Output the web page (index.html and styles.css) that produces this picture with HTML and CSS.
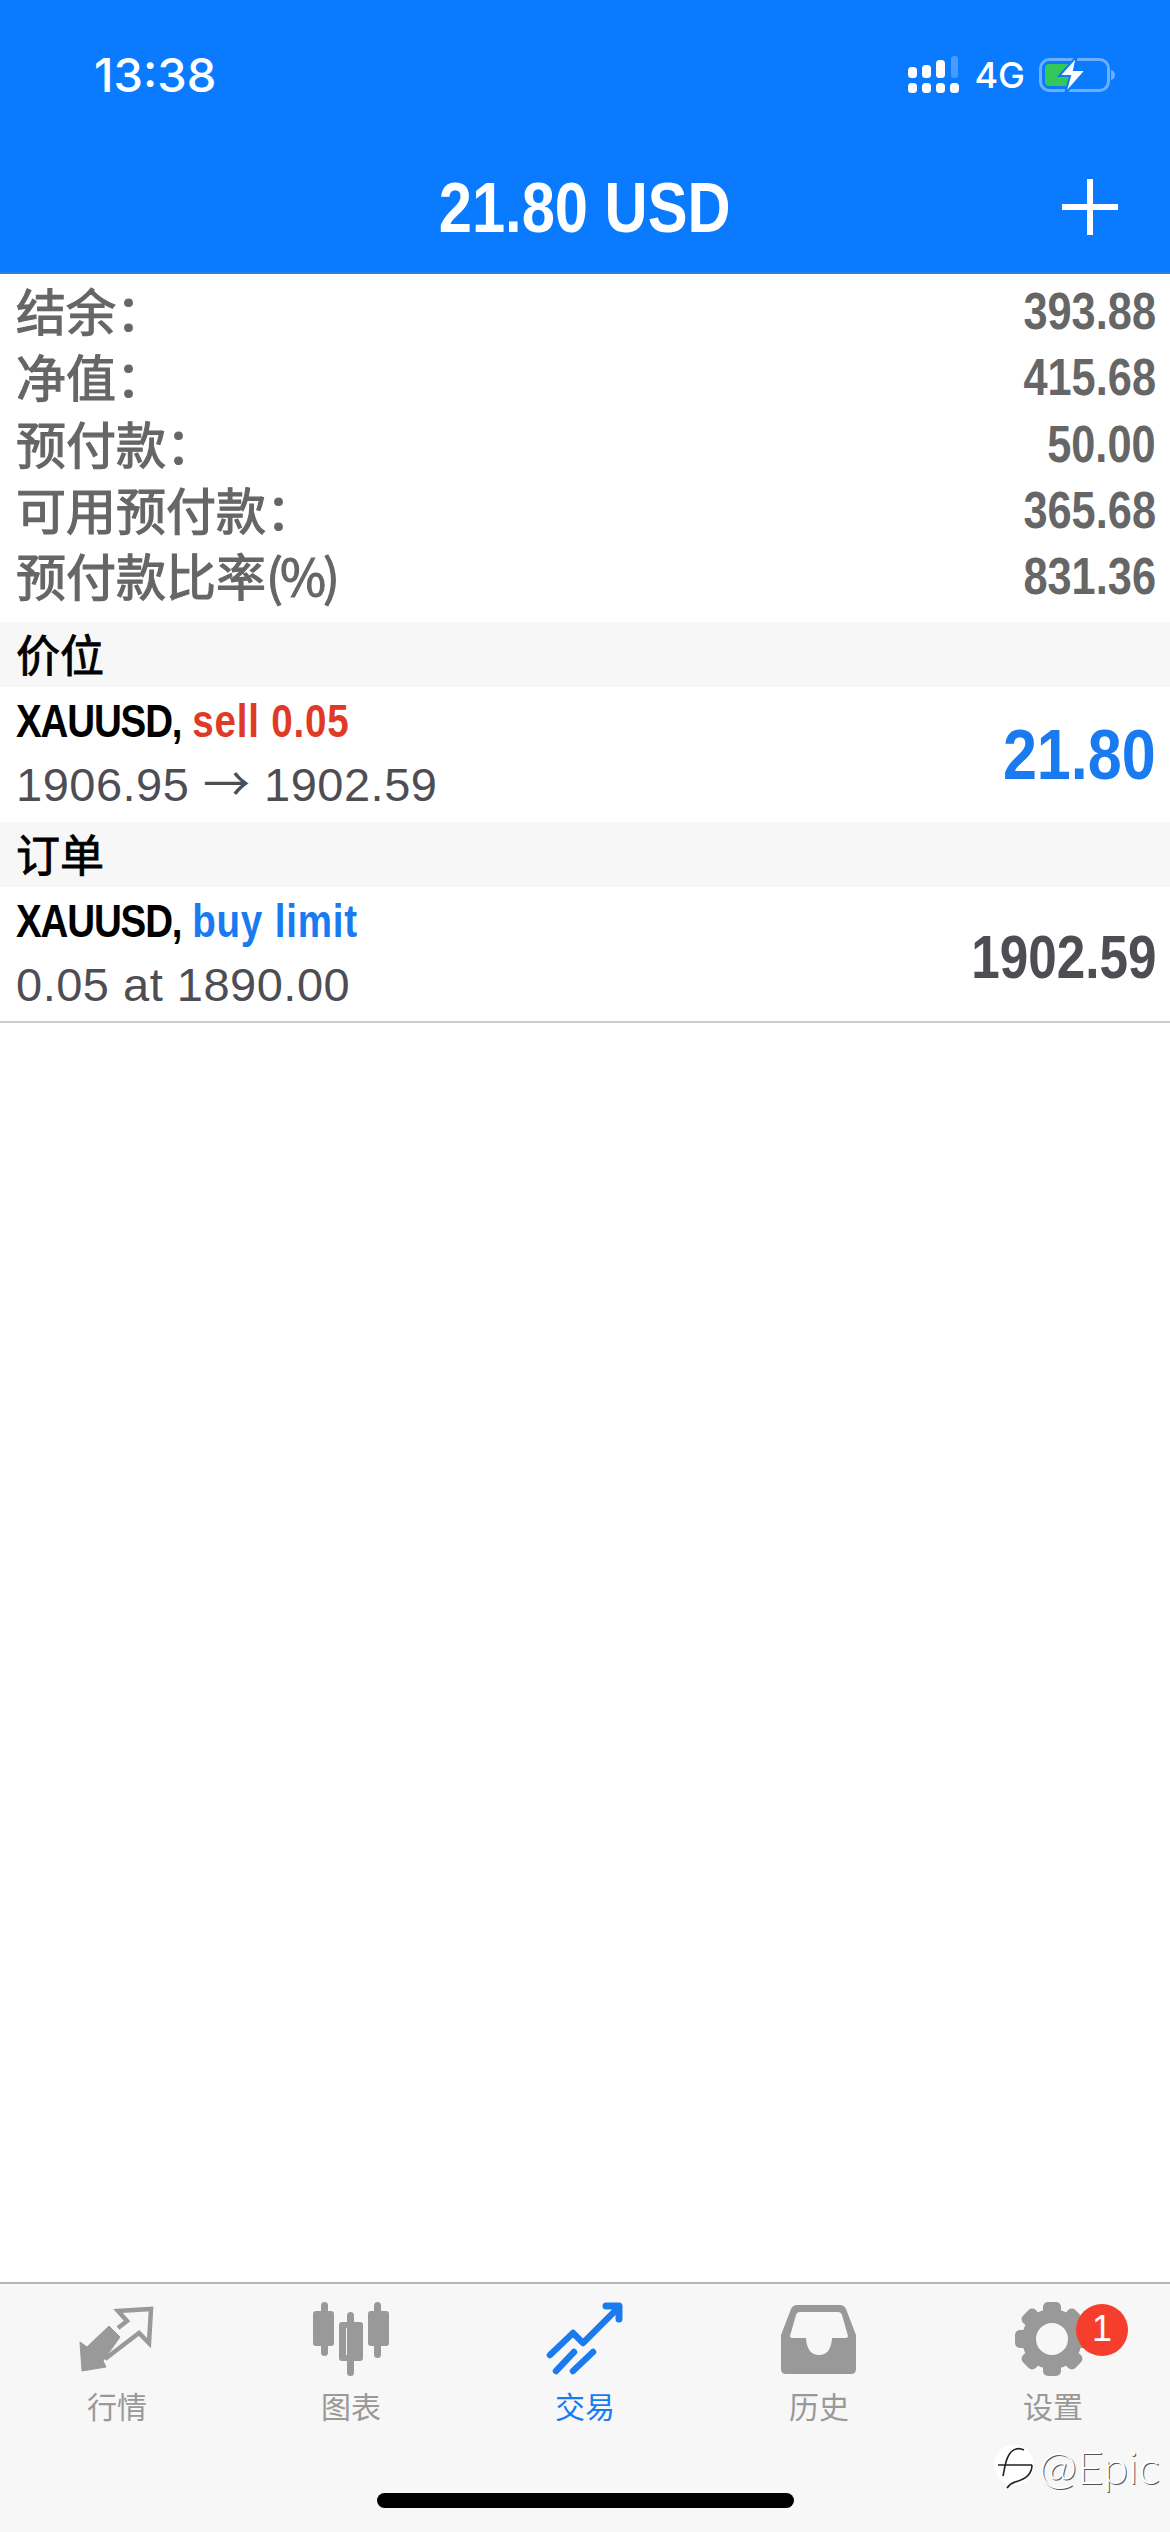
FILE: index.html
```html
<!DOCTYPE html>
<html lang="zh">
<head>
  <meta charset="UTF-8">
  <title>交易</title>
  <meta name="viewport" content="width=device-width, initial-scale=1.0">
  <link rel="stylesheet" href="styles.css">
</head>
<body>
  <div class="page">
    <header class="header">
      <div class="status-bar">
        <span class="time">13:38</span>
        <div class="status-icons">
          <svg class="signal" width="52" height="37" viewBox="0 0 52 37">
            <g fill="#fff">
              <rect x="1" y="27" width="9" height="10" rx="3.5"/>
              <rect x="15" y="27" width="9" height="10" rx="3.5"/>
              <rect x="29" y="27" width="9" height="10" rx="3.5"/>
              <rect x="43" y="27" width="9" height="10" rx="3.5"/>
              <rect x="1" y="11" width="9" height="11" rx="3.5"/>
              <rect x="15" y="9" width="9" height="13" rx="3.5"/>
              <rect x="29" y="4" width="9" height="18" rx="3.5"/>
            </g>
            <rect x="44" y="0" width="7" height="22" rx="3" fill="#fff" opacity="0.25"/>
          </svg>
          <span class="network">4G</span>
          <svg class="battery" width="78" height="38" viewBox="0 0 78 38">
            <rect x="1.5" y="3.5" width="68" height="31" rx="9" fill="none" stroke="#fff" stroke-opacity="0.4" stroke-width="3"/>
            <path d="M72 14q4 1 4 5t-4 5z" fill="#fff" fill-opacity="0.4"/>
            <rect x="6" y="8" width="30" height="22" rx="4" fill="#34c759"/>
            <path d="M38 0L20 20h11l-5 18 21-24H35z" fill="#fff" stroke="#0a7aff" stroke-width="2"/>
          </svg>
        </div>
      </div>
      <div class="title-bar">
        <span></span>
        <h1 class="title">21.80 USD</h1>
        <button class="add-btn" aria-label="add">
          <svg width="58" height="56" viewBox="0 0 58 56">
            <path d="M29 0v56M1 28h56" stroke="#fff" stroke-width="6" fill="none"/>
          </svg>
        </button>
      </div>
    </header>

    <main class="content">
      <section class="summary">
        <div class="summary-row"><span class="label">结余<span class="colon">：</span></span><b class="num">393.88</b></div>
        <div class="summary-row"><span class="label">净值<span class="colon">：</span></span><b class="num">415.68</b></div>
        <div class="summary-row"><span class="label">预付款<span class="colon">：</span></span><b class="num">50.00</b></div>
        <div class="summary-row"><span class="label">可用预付款<span class="colon">：</span></span><b class="num">365.68</b></div>
        <div class="summary-row"><span class="label">预付款比率<span class="percent">(%)</span></span><b class="num">831.36</b></div>
      </section>

      <div class="section-head">价位</div>
      <div class="trade-row">
        <div class="trade-info">
          <div class="trade-title"><span class="symbol">XAUUSD,</span> <span class="sell">sell 0.05</span></div>
          <div class="trade-sub">1906.95 <span class="arrow">→</span> 1902.59</div>
        </div>
        <b class="profit">21.80</b>
      </div>

      <div class="section-head">订单</div>
      <div class="trade-row last">
        <div class="trade-info">
          <div class="trade-title"><span class="symbol">XAUUSD,</span> <span class="buy">buy limit</span></div>
          <div class="trade-sub">0.05 at 1890.00</div>
        </div>
        <b class="price">1902.59</b>
      </div>
    </main>

    <nav class="tab-bar">
      <div class="tabs">
        <div class="tab">
          <svg width="110" height="90" viewBox="0 0 110 90">
            <path d="M56 33l9-7-9-10 33-2-2 34-10-10-34 26" fill="none" stroke="#999" stroke-width="4.5"/>
            <path d="M47 31l11 11-17 24 3 6-24 4-2-29 7 5z" fill="#999" stroke="#999" stroke-width="1" stroke-linejoin="round"/>
          </svg>
          <span>行情</span>
        </div>
        <div class="tab">
          <svg width="110" height="90" viewBox="0 0 110 90">
            <g fill="#999">
              <rect x="25" y="7" width="7" height="54" rx="3.5"/>
              <rect x="17" y="16" width="21" height="35" rx="3"/>
              <rect x="51" y="17" width="7" height="64" rx="3.5"/>
              <path fill-rule="evenodd" d="M47 27h18a3 3 0 0 1 3 3v33a3 3 0 0 1-3 3H47a3 3 0 0 1-3-3V30a3 3 0 0 1 3-3zm4 6v27h7V33z" transform="translate(-1)"/>
              <rect x="78" y="7" width="7" height="56" rx="3.5"/>
              <rect x="72" y="16" width="21" height="35" rx="3"/>
            </g>
          </svg>
          <span>图表</span>
        </div>
        <div class="tab active">
          <svg width="110" height="90" viewBox="0 0 110 90">
            <g fill="none" stroke="#1a7af0" stroke-width="6.5" stroke-linecap="round" stroke-linejoin="round">
              <path d="M20 60l23-22 10 10 35-35"/>
              <path d="M76 11h13v13" stroke-width="7"/>
              <path d="M26 76l18-19M43 76l20-19"/>
            </g>
          </svg>
          <span>交易</span>
        </div>
        <div class="tab">
          <svg width="110" height="90" viewBox="0 0 110 90">
            <path fill="#999" fill-rule="evenodd" d="M33 10h43q4 0 6 4l10 26v34q0 5-5 5H22q-5 0-5-5V40l10-26q2-4 6-4zm3 7q-3 0-4 3l-6 21q0 2 2 2h14q1 17 13 17t13-17h14q2 0 2-2l-6-21q-1-3-4-3z"/>
          </svg>
          <span>历史</span>
        </div>
        <div class="tab">
          <svg width="110" height="90" viewBox="-54 -44 110 90">
            <circle r="23" fill="none" stroke="#999" stroke-width="14"/>
            <g fill="#999">
              <rect x="-9" y="-37" width="18" height="14" rx="5"/>
              <rect x="-9" y="-37" width="18" height="14" rx="5" transform="rotate(45)"/>
              <rect x="-9" y="-37" width="18" height="14" rx="5" transform="rotate(90)"/>
              <rect x="-9" y="-37" width="18" height="14" rx="5" transform="rotate(135)"/>
              <rect x="-9" y="-37" width="18" height="14" rx="5" transform="rotate(180)"/>
              <rect x="-9" y="-37" width="18" height="14" rx="5" transform="rotate(225)"/>
              <rect x="-9" y="-37" width="18" height="14" rx="5" transform="rotate(270)"/>
              <rect x="-9" y="-37" width="18" height="14" rx="5" transform="rotate(315)"/>
            </g>
          </svg>
          <span>设置</span>
          <i class="badge">1</i>
        </div>
      </div>
      <div class="home-bar"></div>
    </nav>

    <div class="watermark">
      <svg width="44" height="46" viewBox="0 0 44 46">
        <circle cx="21" cy="21" r="20" fill="#fff"/>
        <path d="M5 21h12M10 32c2-9 3-24 13-27 3-1 6 0 8 1M17 21h22M39 21c0 10-9 15-17 17-3 1-6 3-8 6" fill="none" stroke="#222" stroke-width="1.6"/>
      </svg>
      <span>@Epic</span>
    </div>
  </div>
</body>
</html>
```

FILE: styles.css
```css
* {
  box-sizing: border-box;
}
body {
  margin: 0;
  background: #fff;
  font-family: "Liberation Sans", "Noto Sans CJK SC", sans-serif;
}
.page {
  position: relative;
  display: flex;
  flex-direction: column;
  height: 2532px;
  overflow: hidden;
}

/* top blue bar */
.header {
  height: 274px;
  background: #0a7aff;
  border-bottom: 2px solid #2b7fe0;
  color: #fff;
}
.status-bar {
  display: flex;
  justify-content: space-between;
  align-items: center;
  height: 112px;
  padding: 37px 53px 0 94px;
}
.time {
  font-family: Inter, sans-serif;
  font-weight: 500;
  font-size: 47px;
}
.status-icons {
  display: flex;
  align-items: center;
}
.network {
  margin: 0 14px 0 15px;
  font-family: Inter, sans-serif;
  font-weight: 500;
  font-size: 36px;
}
.title-bar {
  display: grid;
  grid-template-columns: 1fr auto 1fr;
  align-items: center;
  margin-top: 61px;
  height: 70px;
}
.title {
  margin: 0;
  font-size: 71px;
  font-weight: bold;
  line-height: 70px;
  transform: scaleX(0.84);
}
.add-btn {
  justify-self: end;
  margin: 0 51px 2px 0;
  padding: 0;
  border: none;
  background: none;
  line-height: 0;
}

/* account numbers */
.content {
  flex: 1;
}
.summary {
  padding: 5px 14px 12px 16px;
  color: #666;
}
.summary-row {
  display: flex;
  justify-content: space-between;
  align-items: center;
  height: 66.25px;
}
.label {
  margin-bottom: 6px;
  font-family: "Noto Sans CJK SC", sans-serif;
  font-size: 50px;
  line-height: 60px;
  -webkit-text-stroke: 1.2px #666;
}
.colon {
  font-family: "Noto Sans CJK TC", sans-serif;
}
.percent {
  letter-spacing: -3px;
}
.num {
  font-size: 51px;
  line-height: 60px;
  transform: scaleX(0.85);
  transform-origin: right;
}
.section-head {
  height: 65px;
  padding-left: 16px;
  background: #f7f7f7;
  color: #000;
  font-family: "Noto Sans CJK SC", sans-serif;
  font-size: 44px;
  line-height: 62px;
  -webkit-text-stroke: 0.9px #000;
}
.trade-row {
  display: flex;
  justify-content: space-between;
  align-items: center;
  height: 135px;
  padding: 0 14px 0 16px;
}
.trade-row.last {
  height: 136px;
  border-bottom: 2px solid #ccc;
}
.trade-info {
  padding-bottom: 3px;
}
.trade-title {
  font-size: 47px;
  font-weight: bold;
  line-height: 64px;
  color: #000;
  transform: scaleX(0.82);
  transform-origin: left;
  white-space: nowrap;
}
.symbol {
  letter-spacing: -1.4px;
}
.sell {
  color: #e03a26;
  letter-spacing: 1px;
}
.buy {
  color: #1a7af0;
  letter-spacing: 1px;
}
.trade-sub {
  font-size: 47px;
  letter-spacing: 0.5px;
  line-height: 64px;
  color: #4d4d53;
}
.arrow {
  font-family: "Noto Sans CJK SC", sans-serif;
  line-height: 40px;
}
.profit {
  font-size: 71px;
  color: #1a7af0;
  transform: scaleX(0.86);
  transform-origin: right;
}
.price {
  margin-top: 5px;
  font-size: 61px;
  color: #4d4d53;
  transform: scaleX(0.84);
  transform-origin: right;
}

/* bottom tabs */
.tab-bar {
  display: flex;
  flex-direction: column;
  height: 250px;
  background: #f7f7f7;
  border-top: 2px solid #b5b5b5;
}
.tabs {
  display: grid;
  grid-template-columns: repeat(5, 234px);
  padding-top: 11px;
}
.tab {
  position: relative;
  display: flex;
  flex-direction: column;
  align-items: center;
  color: #999;
  font-size: 30px;
  line-height: 46px;
}
.tab.active {
  color: #1a7af0;
}
.badge {
  position: absolute;
  left: 140px;
  top: 9px;
  width: 52px;
  height: 52px;
  border-radius: 50%;
  background: #f63e2c;
  color: #fff;
  font-style: normal;
  font-size: 36px;
  line-height: 50px;
  text-align: center;
}
.home-bar {
  width: 417px;
  height: 15px;
  margin: auto auto 24px;
  border-radius: 8px;
  background: #000;
}
.watermark {
  position: absolute;
  right: 10px;
  bottom: 38px;
  display: flex;
  align-items: center;
  gap: 2px;
  font-family: Lato, sans-serif;
  font-weight: 300;
  font-size: 46px;
  color: #fff;
  text-shadow: 1px 1px 0 #555;
}
```
